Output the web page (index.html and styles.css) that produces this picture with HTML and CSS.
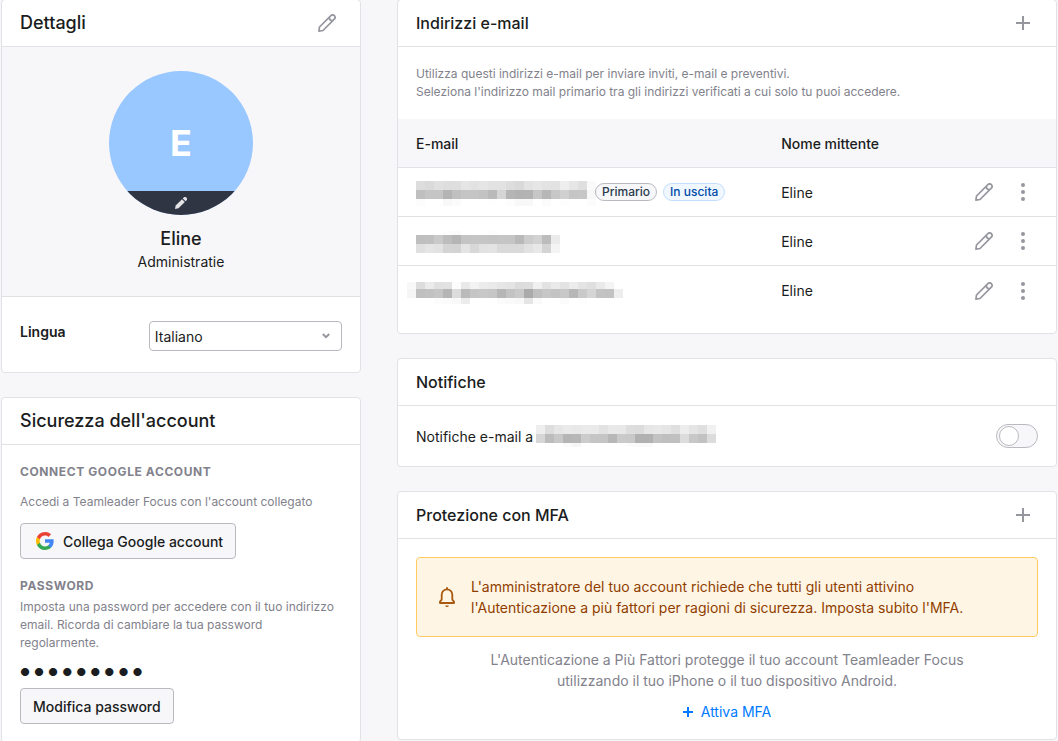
FILE: index.html
```html
<!DOCTYPE html>
<html lang="it">
<head>
  <meta charset="UTF-8">
  <meta name="viewport" content="width=device-width, initial-scale=1">
  <title>Il mio profilo</title>
  <link rel="stylesheet" href="styles.css">
</head>
<body>

  <!-- Shared icons -->
  <svg class="sprite" aria-hidden="true">
    <symbol id="icon-pencil" viewBox="0 0 18 18">
      <g fill="none" stroke="currentColor" stroke-width="1.7" stroke-linejoin="round">
        <path d="M0.9 17.1 L1.5 13 L12.9 1.7 A2.4 2.4 0 0 1 16.3 5.1 L5 16.5 Z"/>
        <path d="M11.2 3.4 A3.6 3.6 0 0 0 14.6 6.8"/>
      </g>
    </symbol>
    <symbol id="icon-plus" viewBox="0 0 14 14">
      <path d="M7 0 V14 M0 7 H14" stroke="currentColor" stroke-width="2"/>
    </symbol>
    <symbol id="icon-dots" viewBox="0 0 18 18">
      <g fill="currentColor">
        <circle cx="9" cy="2" r="2"/>
        <circle cx="9" cy="9" r="2"/>
        <circle cx="9" cy="16" r="2"/>
      </g>
    </symbol>
  </svg>

  <main class="page">

    <!-- Left column -->
    <div class="column">
      <section class="card">
        <header class="card-header">
          <h2 class="title-large">Dettagli</h2>
          <button class="icon-button" aria-label="Modifica dettagli"><svg class="icon"><use href="#icon-pencil"/></svg></button>
        </header>

        <div class="profile">
          <div class="avatar">
            <span class="avatar-letter">E</span>
            <button class="avatar-edit" aria-label="Cambia foto">
              <svg width="12" height="12" viewBox="0 0 12 12" fill="currentColor">
                <path d="M0 12 L0.7 8.5 L7 2.2 L9.8 5 L3.5 11.3 Z"/>
                <path d="M7.8 1.4 L8.6 0.6 A1.9 1.9 0 0 1 11.4 3.4 L10.6 4.2 Z"/>
              </svg>
            </button>
          </div>
          <h3 class="profile-name">Eline</h3>
          <p class="profile-role">Administratie</p>
        </div>

        <div class="language">
          <label for="language">Lingua</label>
          <div class="select-wrapper">
            <select id="language">
              <option>Italiano</option>
            </select>
            <svg class="select-arrow" width="8" height="6" viewBox="0 0 8 6"><path d="M0.8 1 L4 4.2 L7.2 1" fill="none" stroke="currentColor" stroke-width="2"/></svg>
          </div>
        </div>
      </section>

      <section class="card">
        <header class="card-header">
          <h2 class="title-large">Sicurezza dell'account</h2>
        </header>
        <div class="security">
          <h3 class="overline">Connect Google account</h3>
          <p class="hint google-hint">Accedi a Teamleader Focus con l'account collegato</p>
          <button class="button google-button">
            <svg width="18" height="18" viewBox="0 0 18 18">
              <path fill="#4285f4" d="M17.64 9.2c0-.64-.06-1.25-.16-1.84H9v3.48h4.84a4.14 4.14 0 0 1-1.8 2.72v2.26h2.92c1.7-1.57 2.68-3.88 2.68-6.62z"/>
              <path fill="#34a853" d="M9 18c2.43 0 4.47-.8 5.96-2.18l-2.92-2.26c-.8.54-1.83.86-3.04.86-2.34 0-4.33-1.58-5.04-3.71H.96v2.33A9 9 0 0 0 9 18z"/>
              <path fill="#fbbc05" d="M3.96 10.71a5.4 5.4 0 0 1 0-3.42V4.96H.96a9 9 0 0 0 0 8.08l3-2.33z"/>
              <path fill="#ea4335" d="M9 3.58c1.32 0 2.5.45 3.44 1.35l2.58-2.59A9 9 0 0 0 .96 4.96l3 2.33C4.67 5.16 6.66 3.58 9 3.58z"/>
            </svg>
            Collega Google account
          </button>

          <h3 class="overline password-title">Password</h3>
          <p class="hint">Imposta una password per accedere con il tuo indirizzo email. Ricorda di cambiare la tua password regolarmente.</p>
          <p class="password-dots">●●●●●●●●●</p>
          <button class="button">Modifica password</button>
        </div>
      </section>
    </div>

    <!-- Right column -->
    <div class="column">
      <section class="card">
        <header class="card-header">
          <h2>Indirizzi e-mail</h2>
          <button class="icon-button" aria-label="Aggiungi indirizzo"><svg class="icon icon-plus"><use href="#icon-plus"/></svg></button>
        </header>
        <p class="hint email-hint">Utilizza questi indirizzi e-mail per inviare inviti, e-mail e preventivi.<br>Seleziona l'indirizzo mail primario tra gli indirizzi verificati a cui solo tu puoi accedere.</p>
        <table class="emails">
          <thead>
            <tr>
              <th class="col-email">E-mail</th>
              <th>Nome mittente</th>
              <th class="col-actions"></th>
            </tr>
          </thead>
          <tbody>
            <tr>
              <td>
                <div class="email">
                  <svg class="masked" width="173" height="26" data-mask="first"></svg>
                  <span class="tag">Primario</span>
                  <span class="tag tag-blue">In uscita</span>
                </div>
              </td>
              <td>Eline</td>
              <td>
                <div class="actions">
                  <button class="icon-button" aria-label="Modifica"><svg class="icon"><use href="#icon-pencil"/></svg></button>
                  <button class="icon-button" aria-label="Altro"><svg class="icon"><use href="#icon-dots"/></svg></button>
                </div>
              </td>
            </tr>
            <tr>
              <td><div class="email"><svg class="masked" width="144" height="26" data-mask="second"></svg></div></td>
              <td>Eline</td>
              <td>
                <div class="actions">
                  <button class="icon-button" aria-label="Modifica"><svg class="icon"><use href="#icon-pencil"/></svg></button>
                  <button class="icon-button" aria-label="Altro"><svg class="icon"><use href="#icon-dots"/></svg></button>
                </div>
              </td>
            </tr>
            <tr>
              <td><div class="email"><svg class="masked" width="207" height="26" data-mask="third"></svg></div></td>
              <td>Eline</td>
              <td>
                <div class="actions">
                  <button class="icon-button" aria-label="Modifica"><svg class="icon"><use href="#icon-pencil"/></svg></button>
                  <button class="icon-button" aria-label="Altro"><svg class="icon"><use href="#icon-dots"/></svg></button>
                </div>
              </td>
            </tr>
          </tbody>
        </table>
      </section>

      <section class="card">
        <header class="card-header">
          <h2>Notifiche</h2>
        </header>
        <div class="notifications">
          <label for="notify">Notifiche e-mail a <svg class="masked" width="180" height="22" data-mask="notify"></svg></label>
          <input type="checkbox" class="toggle" id="notify">
        </div>
      </section>

      <section class="card">
        <header class="card-header">
          <h2>Protezione con MFA</h2>
          <button class="icon-button" aria-label="Aggiungi MFA"><svg class="icon icon-plus"><use href="#icon-plus"/></svg></button>
        </header>
        <div class="mfa">
          <div class="banner">
            <svg class="bell" width="24" height="24" viewBox="0 0 24 24" fill="none" stroke="currentColor" stroke-width="1.8">
              <path d="M5 18 V16.6 L6.7 14.6 V9.6 A5.3 5.3 0 0 1 17.3 9.6 V14.6 L19 16.6 V18 Z" stroke-linejoin="round"/>
              <path d="M12 2.2 V4.6"/>
              <path d="M10.2 20.4 A1.8 1.6 0 0 0 13.8 20.4 Z" fill="currentColor" stroke="none"/>
            </svg>
            <p>L'amministratore del tuo account richiede che tutti gli utenti attivino l'Autenticazione a più fattori per ragioni di sicurezza. Imposta subito l'MFA.</p>
          </div>
          <p class="mfa-text">L'Autenticazione a Più Fattori protegge il tuo account Teamleader Focus utilizzando il tuo iPhone o il tuo dispositivo Android.</p>
          <a href="#" class="mfa-link">
            <svg width="10" height="10" viewBox="0 0 10 10"><path d="M5 0 V10 M0 5 H10" stroke="currentColor" stroke-width="2"/></svg>
            Attiva MFA
          </a>
        </div>
      </section>
    </div>

  </main>

  <script>
    // Masked addresses: each row is [y, height, x, grey levels (hex) of the blocks]
    const masks = {
      first: [
        [2, 9, 0, "dd da e0 de de e5 e2 e5 e2 e2 dd d9 e3 e6 e3 e2 ee e6 df fa"],
        [11, 9, 0, "bf c5 c5 b4 c0 c5 c5 c2 ba d5 b5 b2 b3 c6 b7 c7 d0 c5 c7 f8"],
        [20, 7, 0, "fc ff ff f8 fb ff ff ff fe ff fd f8 f8 ff fb ff fd ff ff fc"]
      ],
      second: [
        [3, 4, 0, "ff ff ff fd fb ff ff ff fd ff ff ff ff ff ff ff"],
        [7, 9, 0, "bf c0 c9 bd b5 c4 c5 c5 c4 c5 c5 b9 cc d2 bc eb"],
        [16, 9, 0, "e0 e5 e2 d4 d3 e4 d8 e2 e3 da da da e2 e8 d4 f4"]
      ],
      third: [
        [4, 7, -9, "f8 dd eb e1 e2 fc e9 f3 ec ea e6 e4 dc dd f0 e2 ea e3 ec e4 df ea f4"],
        [11, 9, -9, "f5 bf c1 c5 b5 dc ba c5 c8 c6 b6 c3 c9 aa bf c7 c3 c8 b7 c9 d5 c3 c2 ee"],
        [20, 6, -9, "ff ff ff fc fb f9 ec ff ff ff fb fa f8 e5 fa ff ff fb ff fd ff ff ff"]
      ],
      notify: [
        [0, 9, 0, "ee dd e6 ea e8 ea ea e2 e9 e8 de dc e6 e8 e5 df ed e5 df f1"],
        [9, 9, 0, "d6 bc c8 b5 b7 cc c5 c5 b7 ca c9 b1 b1 c2 bf c0 dc c8 c2 dc"],
        [18, 4, 0, "ff ff ff fb f6 ff ff ff ff ff fb fa fa ff ff ff fd ff ff ff"]
      ]
    };

    document.querySelectorAll(".masked").forEach(svg => {
      svg.innerHTML = masks[svg.dataset.mask].map(([y, height, left, greys]) =>
        greys.split(" ").map((grey, i) =>
          `<rect x="${left + i * 9}" y="${y}" width="9" height="${height}" fill="#${grey.repeat(3)}"/>`
        ).join("")
      ).join("");
    });
  </script>

</body>
</html>
```
FILE: styles.css
```css
* {
  box-sizing: border-box;
}

body {
  margin: 0;
  background-color: #f7f7fa;
  color: #1a1c20;
  font-family: Inter, sans-serif;
  font-size: 14px;
  line-height: 21px;
}

h2,
h3,
p {
  margin: 0;
  font-weight: normal;
}

button,
select {
  font: inherit;
  color: inherit;
  cursor: pointer;
}

.sprite {
  display: none;
}

.page {
  display: grid;
  grid-template-columns: 360px 1fr;
  gap: 36px;
  align-items: start;
  margin: -1px 1px 0;
}

.column {
  display: flex;
  flex-direction: column;
  gap: 24px;
}

.card {
  background-color: white;
  border: 1px solid #e1e2e6;
  border-radius: 4px;
  overflow: hidden;
}

.card-header {
  display: flex;
  justify-content: space-between;
  align-items: center;
  height: 47px;
  padding: 0 24px 0 18px;
  border-bottom: 1px solid #e1e2e6;
}

.card-header h2 {
  font-size: 16px;
  line-height: 24px;
  font-weight: 500;
}

.card-header .title-large {
  font-size: 18px;
}

.icon-button {
  display: flex;
  align-items: center;
  justify-content: center;
  width: 18px;
  height: 18px;
  padding: 0;
  border: none;
  background: none;
  color: #96969f;
}

.icon {
  width: 18px;
  height: 18px;
}

.icon-plus {
  width: 14px;
  height: 14px;
}

/* Profile */
.profile {
  display: flex;
  flex-direction: column;
  align-items: center;
  padding: 24px;
  background-color: #f7f7fa;
  border-bottom: 1px solid #e1e2e6;
}

.avatar {
  position: relative;
  display: flex;
  align-items: center;
  justify-content: center;
  width: 144px;
  height: 144px;
  margin-bottom: 12px;
  border-radius: 50%;
  background-color: #99c7ff;
  overflow: hidden;
}

.avatar-letter {
  color: white;
  font-size: 36px;
  font-weight: 700;
}

.avatar-edit {
  position: absolute;
  left: 0;
  right: 0;
  bottom: 0;
  display: flex;
  align-items: center;
  justify-content: center;
  height: 24px;
  padding: 0;
  border: none;
  background-color: #2f3543;
  color: #e4e4e6;
}

.profile-name {
  font-size: 18px;
  line-height: 24px;
  font-weight: 500;
}

.language {
  display: flex;
  justify-content: space-between;
  align-items: flex-start;
  padding: 24px 18px 21px;
}

.language label {
  font-weight: 600;
}

.select-wrapper {
  position: relative;
  width: 60%;
}

.select-wrapper select {
  display: block;
  width: 100%;
  height: 30px;
  padding: 0 5px;
  border: 1px solid #b9b9c0;
  border-radius: 4px;
  background-color: white;
  appearance: none;
}

.select-arrow {
  position: absolute;
  right: 12px;
  top: 12px;
  color: #96969f;
  pointer-events: none;
}

/* Security */
.security {
  padding: 18px;
}

.overline {
  color: #82828c;
  font-size: 12px;
  line-height: 18px;
  font-weight: 700;
  letter-spacing: 0.05em;
  text-transform: uppercase;
}

.hint {
  color: #82828c;
  font-size: 12px;
  line-height: 18px;
}

.google-hint {
  margin: 12px 0;
}

.button {
  display: flex;
  align-items: center;
  height: 36px;
  padding: 0 12px;
  border: 1px solid #b9b9c0;
  border-radius: 4px;
  background-color: #f7f7fa;
  font-weight: 500;
}

.google-button {
  gap: 9px;
  padding-left: 15px;
}

.password-title {
  margin-top: 18px;
  margin-bottom: 3px;
}

.password-dots {
  margin: 10px 0 5px;
  font-size: 11px;
  letter-spacing: 4px;
}

/* E-mail addresses */
.email-hint {
  padding: 18px;
}

.emails {
  width: 100%;
  margin-bottom: 18px;
  border-spacing: 0;
}

.emails th,
.emails td {
  height: 49px;
  padding: 0 0 0 18px;
  text-align: left;
  border-bottom: 1px solid #e1e2e6;
}

.emails th {
  background-color: #f7f7fa;
  font-weight: 500;
}

.emails tbody tr:last-child td {
  border-bottom: none;
}

.emails .col-email {
  width: 55.5%;
}

.emails .col-actions {
  width: 100px;
}

.email {
  display: flex;
  align-items: center;
  gap: 6px;
}

.masked {
  overflow: visible;
  shape-rendering: crispEdges;
}

.tag {
  padding: 0 6px;
  border: 1px solid #b9b9c0;
  border-radius: 9px;
  background-color: #f7f7fa;
  color: #2a3b4d;
  font-size: 12px;
  line-height: 16px;
  font-weight: 500;
  z-index: 1;
}

.tag-blue {
  border-color: #c2dfff;
  background-color: #f0f7ff;
  color: #004ba8;
}

.actions {
  display: flex;
  justify-content: flex-end;
  gap: 21px;
  padding-right: 24px;
}

/* Notifications */
.notifications {
  display: flex;
  justify-content: space-between;
  align-items: center;
  padding: 18px;
}

.notifications label {
  display: flex;
  align-items: center;
  gap: 3px;
}

.toggle {
  display: flex;
  align-items: center;
  width: 42px;
  height: 24px;
  margin: 0;
  padding: 0 2px;
  border: 1px solid #b9b9c0;
  border-radius: 12px;
  background-color: #f7f7fa;
  appearance: none;
  cursor: pointer;
}

.toggle::before {
  content: "";
  width: 18px;
  height: 18px;
  border: 1px solid #b9b9c0;
  border-radius: 50%;
  background-color: white;
}

.toggle:checked {
  justify-content: flex-end;
  background-color: #007aff;
}

/* MFA */
.mfa {
  display: flex;
  flex-direction: column;
  align-items: center;
  padding: 18px 18px 17px;
}

.banner {
  display: flex;
  align-items: center;
  gap: 12px;
  width: 100%;
  margin-bottom: 12px;
  padding: 18px;
  border: 1px solid #ffcb60;
  border-radius: 4px;
  background-color: #fff5e5;
  color: #8f3e00;
}

.banner p {
  max-width: 510px;
}

.bell {
  flex: none;
  color: #a8580f;
}

.mfa-text {
  max-width: 510px;
  margin-bottom: 10px;
  color: #82828c;
  text-align: center;
}

.mfa-link {
  display: flex;
  align-items: center;
  gap: 8px;
  color: #007aff;
  text-decoration: none;
}
```
